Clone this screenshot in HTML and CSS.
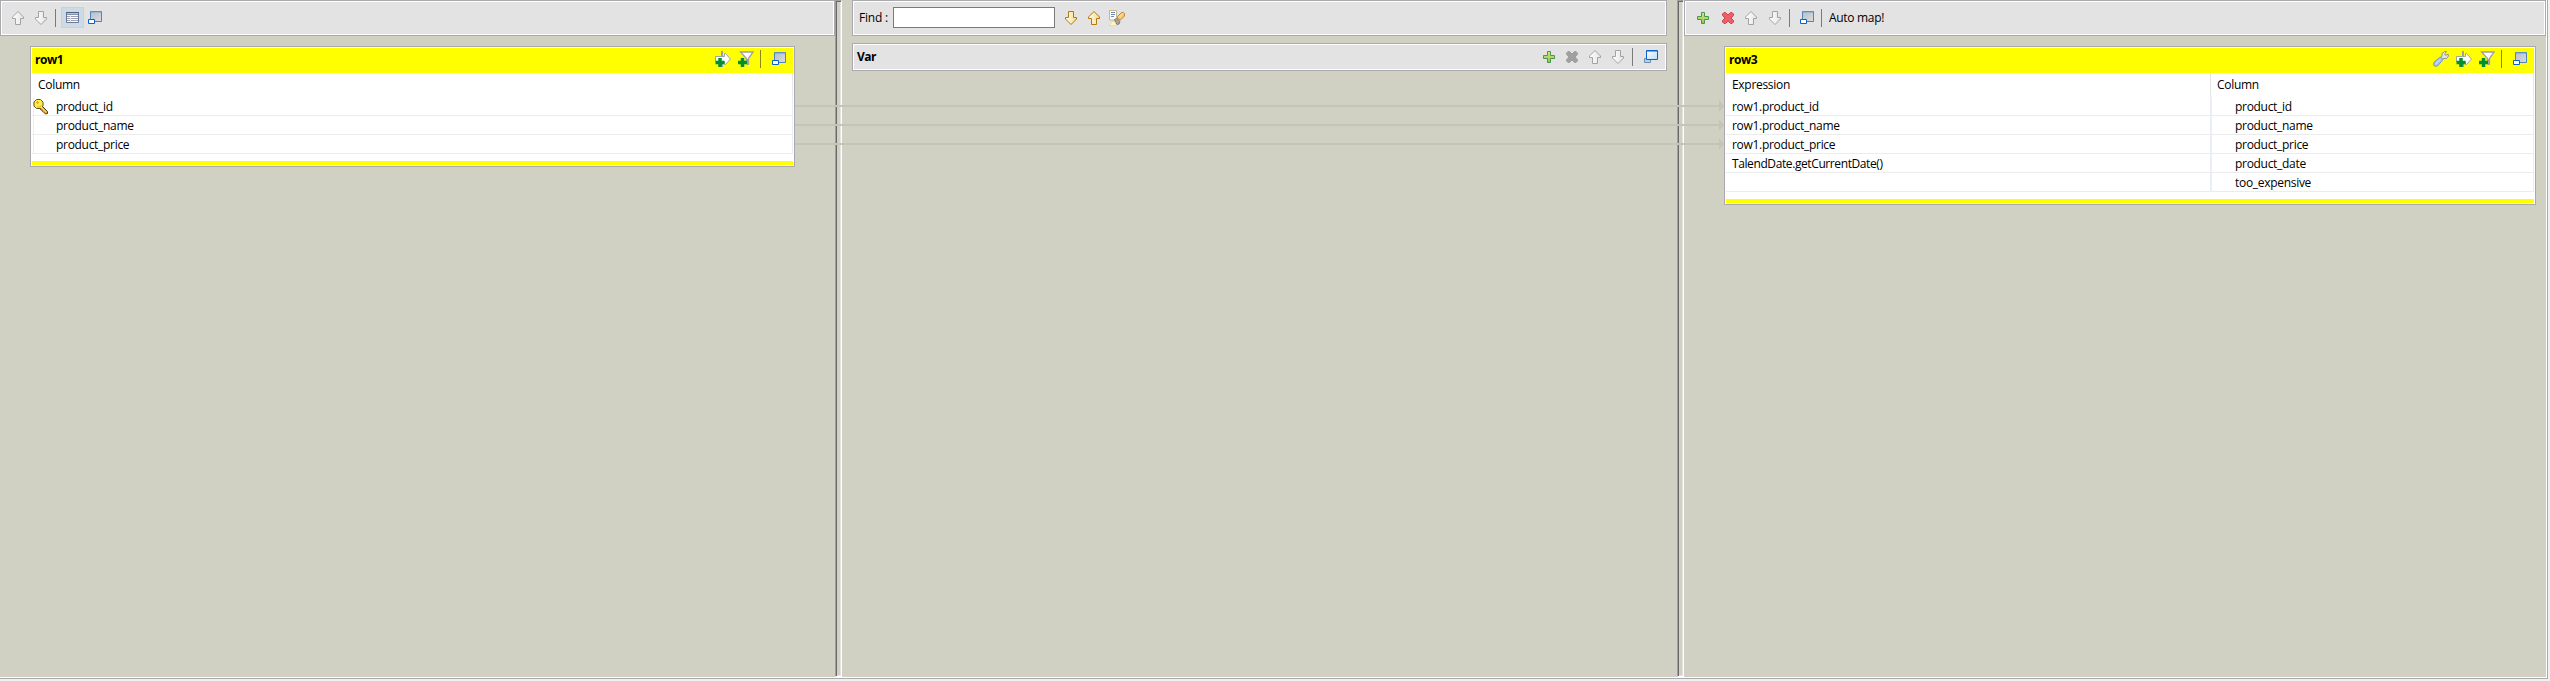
FILE: index.html
```html
<!DOCTYPE html>
<html lang="en">
<head>
<meta charset="utf-8">
<title>Map Editor</title>
<link rel="stylesheet" href="styles.css">
</head>
<body>
<svg class="defs" width="0" height="0">
  <defs>
    <linearGradient id="gGray" x2="1"><stop offset="0" stop-color="#fff"/><stop offset="1" stop-color="#e4e4e4"/></linearGradient>
    <linearGradient id="gGold" x2="1"><stop offset="0" stop-color="#fffdf0"/><stop offset="1" stop-color="#f5dc84"/></linearGradient>
    <linearGradient id="gWin" x2="1" y2="1"><stop offset="0" stop-color="#b4bfcc"/><stop offset="1" stop-color="#dcdcdc"/></linearGradient>
    <linearGradient id="gRestore" x2="1" y2="1"><stop offset="0" stop-color="#fff"/><stop offset="1" stop-color="#b5dcfa"/></linearGradient>
    <linearGradient id="gGreen" x2="0" y2="1"><stop offset="0" stop-color="#d8e878"/><stop offset="1" stop-color="#9cc04c"/></linearGradient>
    <symbol id="up" viewBox="0 0 16 16"><path d="M8 1.500 13.500 7v1.500h-3v6h-5v-6h-3V7Z"/></symbol>
    <symbol id="down" viewBox="0 0 16 16"><path d="M5.500 1.500h5v6h3V9L8 14.500 2.500 9V7.500h3Z"/></symbol>
    <symbol id="plus" viewBox="0 0 16 16"><path d="M6.500 2.500h3v4h4v3h-4v4h-3v-4h-4v-3h4Z" fill="url(#gGreen)" stroke="#439758"/></symbol>
    <symbol id="cross" viewBox="0 0 16 16"><path d="M4 2.500h1.500L8 5l2.500-2.500H12L13.500 4v1.500L11 8l2.500 2.500V12L12 13.500h-1.500L8 11l-2.500 2.500H4L2.500 12v-1.500L5 8 2.500 5.500V4Z"/></symbol>
    <symbol id="min" viewBox="0 0 16 16"><path d="M3.500 1.500h11v10h-11Z" fill="url(#gWin)" stroke="#5184bb"/><path d="M4 2h10" stroke="#6f9fd2"/><path d="M1.500 9.500h6v4h-6Z" fill="#fff" stroke="#0b61c9"/></symbol>
    <symbol id="restore" viewBox="0 0 16 16"><path d="M1.500 9.500h6v4h-6Z" fill="#c3cdd9" stroke="#6790bd"/><path d="M3.500 1.500h11v9h-11Z" fill="url(#gRestore)" stroke="#0b61c9"/><path d="M4 2h10" stroke="#0b61c9"/></symbol>
    <symbol id="grid" viewBox="0 0 16 16"><path d="M1.500 2.500h12v10h-12Z" fill="#fff" stroke="#687795"/><path d="M1 2.500h13" stroke="#53617f"/><path d="M2 3.500h11" stroke="#b9c4da"/><path d="M2 4.500h11" stroke="#8391b0"/><path d="M2 6.500h11M2 8.500h11M2 10.500h11" stroke="#98a0b2"/><path d="M5.500 5v7" stroke="#e6e9ef"/></symbol>
    <symbol id="exprPlus" viewBox="0 0 16 16"><path d="M7 0v16" stroke="#a0a0a0" stroke-width="2"/><path d="M.5 5.500h9V2.500h1L15.500 8l-5 5.500h-1v-3h-9Z" fill="#fff" stroke="#a3a3a3"/><path d="M5 7v9M.5 11.500h9" stroke="#009030" stroke-width="3.500"/></symbol>
    <symbol id="filterPlus" viewBox="0 0 16 16"><path d="M2.500 1h12.600L10.500 7.500v5h-2v-5Z" fill="#fff" stroke="#a0a0a0" stroke-width="1.300"/><path d="M10 8v6" stroke="#a0a0a0" stroke-width="2"/><path d="M4.500 7v9M0 11.500h9" stroke="#009030" stroke-width="3.500"/></symbol>
    <symbol id="wrench" viewBox="0 0 16 16"><path d="M8 6.500 9 5V2.500L11.500.5h2L12 2.500V4h2l1-1 .5 2-2 2.500h-3L9 8.500Z" fill="#e5e5e5" stroke="#929292"/><path d="M7.500 6 10 8.500 5 14.500l-3 1L.7 14l.5-3Z" fill="#a9c7ee" stroke="#7292bd"/><path d="M2.500 13 7 8.500" stroke="#d6e6fa"/></symbol>
    <symbol id="key" viewBox="0 0 16 16"><path d="m8.500 6.500 6 6v2l-2 .5-2.500-2.500L6 9Z" fill="#f0ad2e" stroke="#4d3b10"/><path d="M3.500.5h4L10 3v4l-2.500 2.500h-4L1 7V3Z" fill="#fff04a" stroke="#66521a"/><path d="M3 3.500h3M4.500 2v3" stroke="#f59c20"/><path d="M4 8h3l1.500-2" stroke="#ddb23a" fill="none"/><path d="m8 8 5 5" stroke="#ffd96c"/></symbol>
    <symbol id="search" viewBox="0 0 16 16"><path d="M.5.5h7v9.500h-7Z" fill="#fff" stroke="#c5b889"/><path d="M2 2.500h4M2 4.500h4M2 6.500h3" stroke="#6b87b8"/><path d="M8.500 8.500V6.500L12.500 2.500h2l1 1v2.500L11.500 10Z" fill="#f5c673" stroke="#c98b2e"/><path d="m10.500 7 3-3" stroke="#fff0c5"/><path d="m5.500 9.500 2-1 3.500 3-1 2.500-2 .5Z" fill="#aaa4a0" stroke="#807a78"/><path d="M.5 15.500 3 11.500h2.500l2 4Z" fill="#fff8bd" stroke="#efcf70" stroke-width=".6"/></symbol>
  </defs>
</svg>

<main class="editor">
  <section class="pane">
    <div class="toolbar">
      <svg class="icon gray"><use href="#up"/></svg>
      <svg class="icon gray icon-gap-7"><use href="#down"/></svg>
      <i class="sep sep-left"></i>
      <span class="toggle"><svg class="icon"><use href="#grid"/></svg></span>
      <svg class="icon"><use href="#min"/></svg>
    </div>
    <div class="table table-in">
      <div class="title"><b>row1</b>
        <div class="tools">
          <svg class="icon"><use href="#exprPlus"/></svg>
          <svg class="icon"><use href="#filterPlus"/></svg>
          <i class="sep"></i>
          <svg class="icon"><use href="#min"/></svg>
        </div>
      </div>
      <div class="head"><span class="head-in">Column</span></div>
      <div class="row"><span class="keycell"><svg class="icon"><use href="#key"/></svg></span><span>product_id</span></div>
      <div class="row"><span class="keycell"></span><span>product_name</span></div>
      <div class="row"><span class="keycell"></span><span>product_price</span></div>
      <div class="foot"></div>
    </div>
  </section>
  <div class="sash"></div>
  <section class="pane pane-mid">
    <div class="toolbar find">
      <label for="find">Find :</label>
      <input id="find" type="text">
      <svg class="icon gold"><use href="#down"/></svg>
      <svg class="icon gold"><use href="#up"/></svg>
      <svg class="icon"><use href="#search"/></svg>
    </div>
    <div class="var"><b>Var</b>
      <div class="tools tools-var">
        <svg class="icon"><use href="#plus"/></svg>
        <svg class="icon dim"><use href="#cross"/></svg>
        <svg class="icon gray"><use href="#up"/></svg>
        <svg class="icon gray"><use href="#down"/></svg>
        <i class="sep"></i>
        <svg class="icon"><use href="#restore"/></svg>
      </div>
    </div>
  </section>
  <div class="sash"></div>
  <section class="pane">
    <div class="toolbar toolbar-out">
      <svg class="icon"><use href="#plus"/></svg>
      <svg class="icon red"><use href="#cross"/></svg>
      <svg class="icon gray"><use href="#up"/></svg>
      <svg class="icon gray"><use href="#down"/></svg>
      <i class="sep"></i>
      <svg class="icon"><use href="#min"/></svg>
      <i class="sep sep-map"></i>
      <span>Auto map!</span>
    </div>
    <div class="table table-out">
      <div class="title"><b>row3</b>
        <div class="tools">
          <svg class="icon"><use href="#wrench"/></svg>
          <svg class="icon"><use href="#exprPlus"/></svg>
          <svg class="icon"><use href="#filterPlus"/></svg>
          <i class="sep"></i>
          <svg class="icon"><use href="#min"/></svg>
        </div>
      </div>
      <div class="head"><span class="expr">Expression</span><span class="head-col">Column</span></div>
      <div class="row"><span class="expr">row1.product_id</span><span class="col">product_id</span></div>
      <div class="row"><span class="expr">row1.product_name</span><span class="col">product_name</span></div>
      <div class="row"><span class="expr">row1.product_price</span><span class="col">product_price</span></div>
      <div class="row"><span class="expr expr-call">TalendDate.getCurrentDate()</span><span class="col">product_date</span></div>
      <div class="row"><span class="expr"></span><span class="col">too_expensive</span></div>
      <div class="foot"></div>
    </div>
  </section>
  <svg class="links" viewBox="0 0 929 50">
    <path d="M0 6h924M0 25h924M0 44h924" stroke="#c5c5b6" stroke-width="2"/>
    <path d="m924 0 5 6-5 6ZM924 19l5 6-5 6ZM924 38l5 6-5 6Z" fill="#c5c5b6"/>
  </svg>
</main>
</body>
</html>
```
FILE: styles.css
```css
* { box-sizing: border-box; }
body {
  margin: 0;
  height: 681px;
  overflow: hidden;
  background: #f0f0f0;
  color: #000;
  font: 12px/16px "Open Sans", "Noto Sans", sans-serif;
  letter-spacing: -0.3px;
}
.defs { position: absolute; }
.editor {
  position: relative;
  display: grid;
  grid-template-columns: 835px 7px 835px 7px 862px;
  width: 2548px;
  height: 679px;
  background: #d0d1c3;
  border-right: 1px solid #a9a9ae;
  border-bottom: 1px solid #a9a9ae;
  box-shadow: inset -1px -1px #fff;
}
.pane-mid { padding: 0 10px; }
.toolbar, .var {
  display: flex;
  align-items: center;
  height: 36px;
  padding: 0 9px 1px;
  background: #e3e3e3;
  border: 1px solid #a9a9ae;
  box-shadow: inset 0 0 0 1px #fff;
}
.icon { flex: none; display: block; width: 16px; height: 16px; fill: none; }
.gray { fill: url(#gGray); stroke: #a3a3a3; }
.gold { fill: url(#gGold); stroke: #b57614; }
.dim { fill: #a0a0a0; stroke: #a0a0a0; }
.red { fill: #ee5e66; stroke: #d4404a; }
.icon-gap-7 { margin-left: 7px; }
.sep { flex: none; width: 1px; height: 18px; background: #7a7a7a; }
.sep-left { margin: 0 5px 0 6px; }
.toggle {
  display: flex;
  align-items: center;
  justify-content: center;
  width: 23px;
  height: 21px;
  margin-right: 3px;
  background: #cddbe7;
  border: 1px solid #bdd5e7;
}
.sash {
  height: 677px;
  border: 1px solid;
  border-color: #a0a0a0 #fff #fff #a0a0a0;
  box-shadow: inset 1px 1px #696969, inset -1px -1px #e3e3e3;
}
.find { padding-left: 6px; }
.find label { width: 34px; letter-spacing: -0.2px; }
.find input {
  width: 162px;
  height: 21px;
  margin: 0 8px 0 0;
  background: #fff;
  border: 1px solid #7a7a7a;
}
.find .gold + .icon { margin-left: 7px; }
.var { height: 28px; margin-top: 7px; padding: 0 7px 1px 4px; justify-content: space-between; }
b { letter-spacing: -0.5px; }
.tools { display: flex; align-items: center; gap: 7px; padding-right: 6px; }
.tools .sep { margin: 0 3px 0 -1px; background: #8a8a10; }
.tools-var { padding: 0; }
.tools-var .sep { margin: 0 3px 0 -1px; background: #7a7a7a; }
.toolbar-out { padding-left: 10px; }
.toolbar-out .red { margin: 0 7px 0 9px; }
.toolbar-out .gray + .gray { margin-left: 8px; }
.toolbar-out .sep { margin: 0 9px 0 6px; }
.toolbar-out .sep-map { margin: 0 7px 0 6px; }
.table {
  margin-top: 10px;
  padding: 1px;
  background: #fff;
  border: 1px solid #a9a9ae;
}
.table-in { width: 765px; margin-left: 30px; }
.table-out { width: 812px; margin-left: 40px; }
.title {
  display: flex;
  align-items: center;
  justify-content: space-between;
  height: 25px;
  padding: 0 0 3px 3px;
  background: #ff0;
}
.title b { padding-top: 1px; }
.head { display: flex; height: 24px; line-height: 24px; border-right: 1px solid #e8e8e8; }
.head-in { padding-left: 6px; }
.row {
  display: flex;
  height: 19px;
  line-height: 20px;
  border-bottom: 1px solid #ececec;
  border-right: 1px solid #e9eef8;
}
.keycell { width: 24px; border-left: 1px solid transparent; box-shadow: inset 1px 0 #ececf2; }
.keycell .icon { margin-top: 2px; }
.expr { width: 484px; padding-left: 6px; }
.head-col { padding-left: 6px; border-left: 1px solid #e4e4e4; }
.row .expr { border-right: 2px solid #e9eef8; width: 486px; }
.expr-call { letter-spacing: -0.4px; }
.col { padding-left: 23px; }
.foot { height: 4px; margin-top: 7px; background: #ff0; }
.links { position: absolute; left: 795px; top: 100px; width: 929px; height: 50px; }
```
